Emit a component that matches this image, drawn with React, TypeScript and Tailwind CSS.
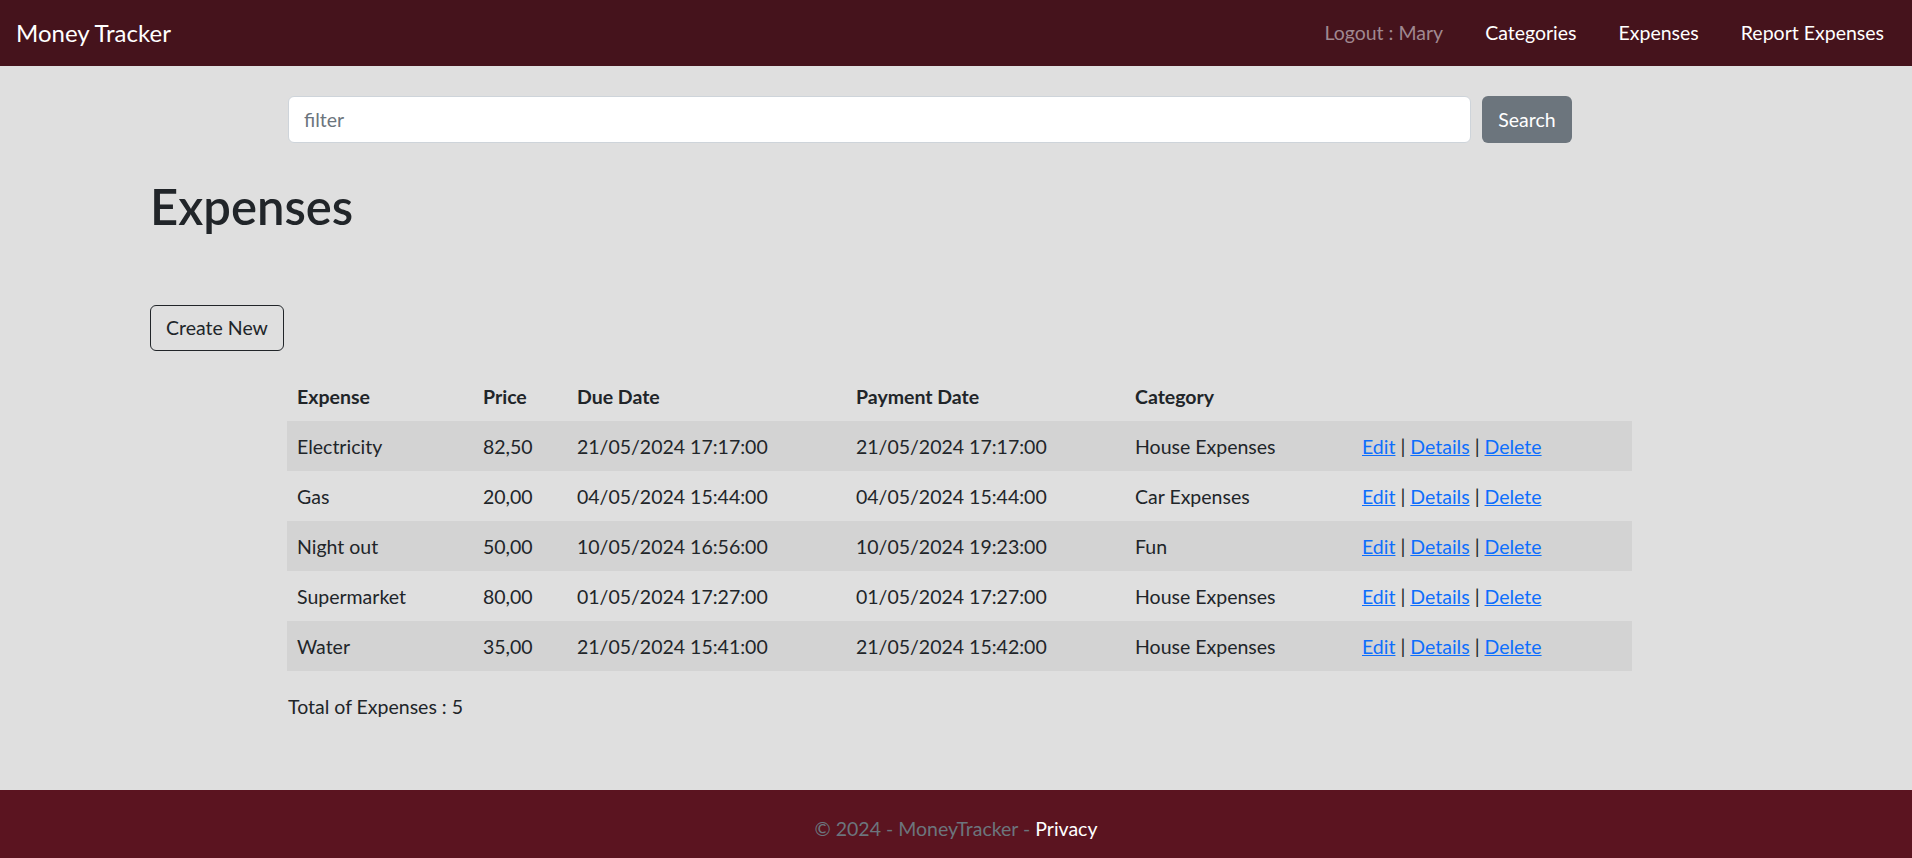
const expenses = [
    { name: "Electricity", price: "82,50", due: "21/05/2024 17:17:00", paid: "21/05/2024 17:17:00", category: "House Expenses" },
    { name: "Gas", price: "20,00", due: "04/05/2024 15:44:00", paid: "04/05/2024 15:44:00", category: "Car Expenses" },
    { name: "Night out", price: "50,00", due: "10/05/2024 16:56:00", paid: "10/05/2024 19:23:00", category: "Fun" },
    { name: "Supermarket", price: "80,00", due: "01/05/2024 17:27:00", paid: "01/05/2024 17:27:00", category: "House Expenses" },
    { name: "Water", price: "35,00", due: "21/05/2024 15:41:00", paid: "21/05/2024 15:42:00", category: "House Expenses" },
]

const navLinks = ["Categories", "Expenses", "Report Expenses"]

const App = () => {
    return (
        <div className="h-screen flex flex-col bg-[#dfdfdf] text-[#212529] font-['Lato',sans-serif] text-[19.5px] leading-[1.5]">

            <header className="h-[66px] shrink-0 bg-[#45131c] flex items-center justify-between pl-[16px] pr-[28px]">
                <a href="#" className="text-[24px] text-white">Money Tracker</a>
                <nav className="flex items-center gap-[42px]">
                    <a href="#" className="text-[#a08890]">Logout : Mary</a>
                    {
                        navLinks.map((link) => (
                            <a key={link} href="#" className="text-white">{link}</a>
                        ))
                    }
                </nav>
            </header>

            <main className="flex-1">

                <form className="ml-[288px] mt-[30px] flex items-center gap-[11px]" onSubmit={(e) => e.preventDefault()}>
                    <input placeholder="filter" className="w-[1183px] h-[47px] bg-white border border-[#ced4da] rounded-[6px] px-[15px] placeholder:text-[#6c757d] outline-none" />
                    <button className="w-[90px] h-[47px] bg-[#6c757d] text-white rounded-[6px]">Search</button>
                </form>

                <div className="pl-[150px]">
                    <h1 className="mt-[34px] text-[49px] font-semibold leading-[1.2]">Expenses</h1>

                    <button className="mt-[69px] w-[134px] h-[46px] border border-[#212529] rounded-[6px]">Create New</button>
                </div>

                <div className="ml-[287px] w-[1345px] mt-[20px]">
                    <table className="w-full table-fixed border-collapse text-left">
                        <colgroup>
                            <col className="w-[186px]" />
                            <col className="w-[94px]" />
                            <col className="w-[279px]" />
                            <col className="w-[279px]" />
                            <col className="w-[227px]" />
                            <col className="w-[280px]" />
                        </colgroup>
                        <thead>
                            <tr className="h-[50px]">
                                <th className="px-[10px] pt-[2px] font-bold">Expense</th>
                                <th className="px-[10px] pt-[2px] font-bold">Price</th>
                                <th className="px-[10px] pt-[2px] font-bold">Due Date</th>
                                <th className="px-[10px] pt-[2px] font-bold">Payment Date</th>
                                <th className="px-[10px] pt-[2px] font-bold">Category</th>
                                <th className="px-[10px]"></th>
                            </tr>
                        </thead>
                        <tbody>
                            {
                                expenses.map((item, index) => (
                                    <tr key={item.name} className={`h-[50px] ${index % 2 == 0 ? "bg-[#d3d3d3]" : ""}`}>
                                        <td className="px-[10px] pt-[2px]">{item.name}</td>
                                        <td className="px-[10px] pt-[2px]">{item.price}</td>
                                        <td className="px-[10px] pt-[2px]">{item.due}</td>
                                        <td className="px-[10px] pt-[2px]">{item.paid}</td>
                                        <td className="px-[10px] pt-[2px]">{item.category}</td>
                                        <td className="px-[10px] pt-[2px]">
                                            <a href="#" className="text-[#0d6efd] underline">Edit</a> | <a href="#" className="text-[#0d6efd] underline">Details</a> | <a href="#" className="text-[#0d6efd] underline">Delete</a>
                                        </td>
                                    </tr>
                                ))
                            }
                        </tbody>
                    </table>

                    <p className="mt-[21px] pl-[1px]">Total of Expenses : {expenses.length}</p>
                </div>

            </main>

            <footer className="h-[68px] shrink-0 bg-[#5b1420] flex items-center justify-center pt-[10px] text-[#6c757d]">
                <span>© 2024 - MoneyTracker - <a href="#" className="text-white">Privacy</a></span>
            </footer>

        </div>
    )
}

export default App
